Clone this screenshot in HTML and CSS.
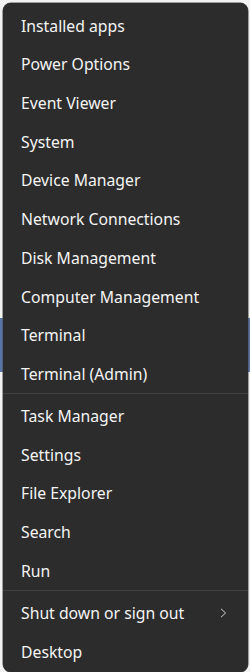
FILE: index.html
```html
<!DOCTYPE html>
<html lang="en">
<head>
    <meta charset="UTF-8">
    <meta name="viewport" content="width=device-width, initial-scale=1.0">
    <title>Quick Link menu</title>
    <link rel="stylesheet" href="styles.css">
</head>
<body>

<div class="menu">
    <div class="item">Installed apps</div>
    <div class="item">Power Options</div>
    <div class="item">Event Viewer</div>
    <div class="item">System</div>
    <div class="item">Device Manager</div>
    <div class="item">Network Connections</div>
    <div class="item">Disk Management</div>
    <div class="item">Computer Management</div>
    <div class="item">Terminal</div>
    <div class="item">Terminal (Admin)</div>

    <div class="sep"></div>

    <div class="item">Task Manager</div>
    <div class="item">Settings</div>
    <div class="item">File Explorer</div>
    <div class="item">Search</div>
    <div class="item">Run</div>

    <div class="sep"></div>

    <!-- submenu entry -->
    <div class="item has-sub">
        <span>Shut down or sign out</span>
        <svg class="chevron" width="7" height="10" viewBox="0 0 7 10">
            <polyline points="1,0.8 5.6,5 1,9.2" fill="none" stroke="#d0d0d0" stroke-width="1"/>
        </svg>
    </div>
    <div class="item">Desktop</div>
</div>

</body>
</html>
```

FILE: styles.css
```css
body {
    margin: 0;
    width: 250px;
    height: 672px;
    overflow: hidden;
    font-family: "Noto Sans", "Open Sans", sans-serif;
    background: linear-gradient(to bottom, #f2f2f2 0, #f2f2f2 318px, #5877a8 318px, #5877a8 372px, #f2f2f2 372px);
}
.menu {
    margin: 3px 0 0 3px;
    width: 245px;
    height: 669px;
    box-sizing: border-box;
    padding: 3.4px 0;
    background-color: #2c2c2c;
    border-radius: 8px;
    box-shadow: 0 0 0 0.5px #4a4a4a;
}
.item {
    height: 38.7px;
    display: flex;
    align-items: center;
    padding: 0 21px 0 18px;
    font-size: 15.75px;
    color: #f4f4f4;
}
.has-sub {
    justify-content: space-between;
}
.chevron {
    display: block;
}
.sep {
    height: 1px;
    background-color: #404040;
    margin-bottom: 2.5px;
}
```
